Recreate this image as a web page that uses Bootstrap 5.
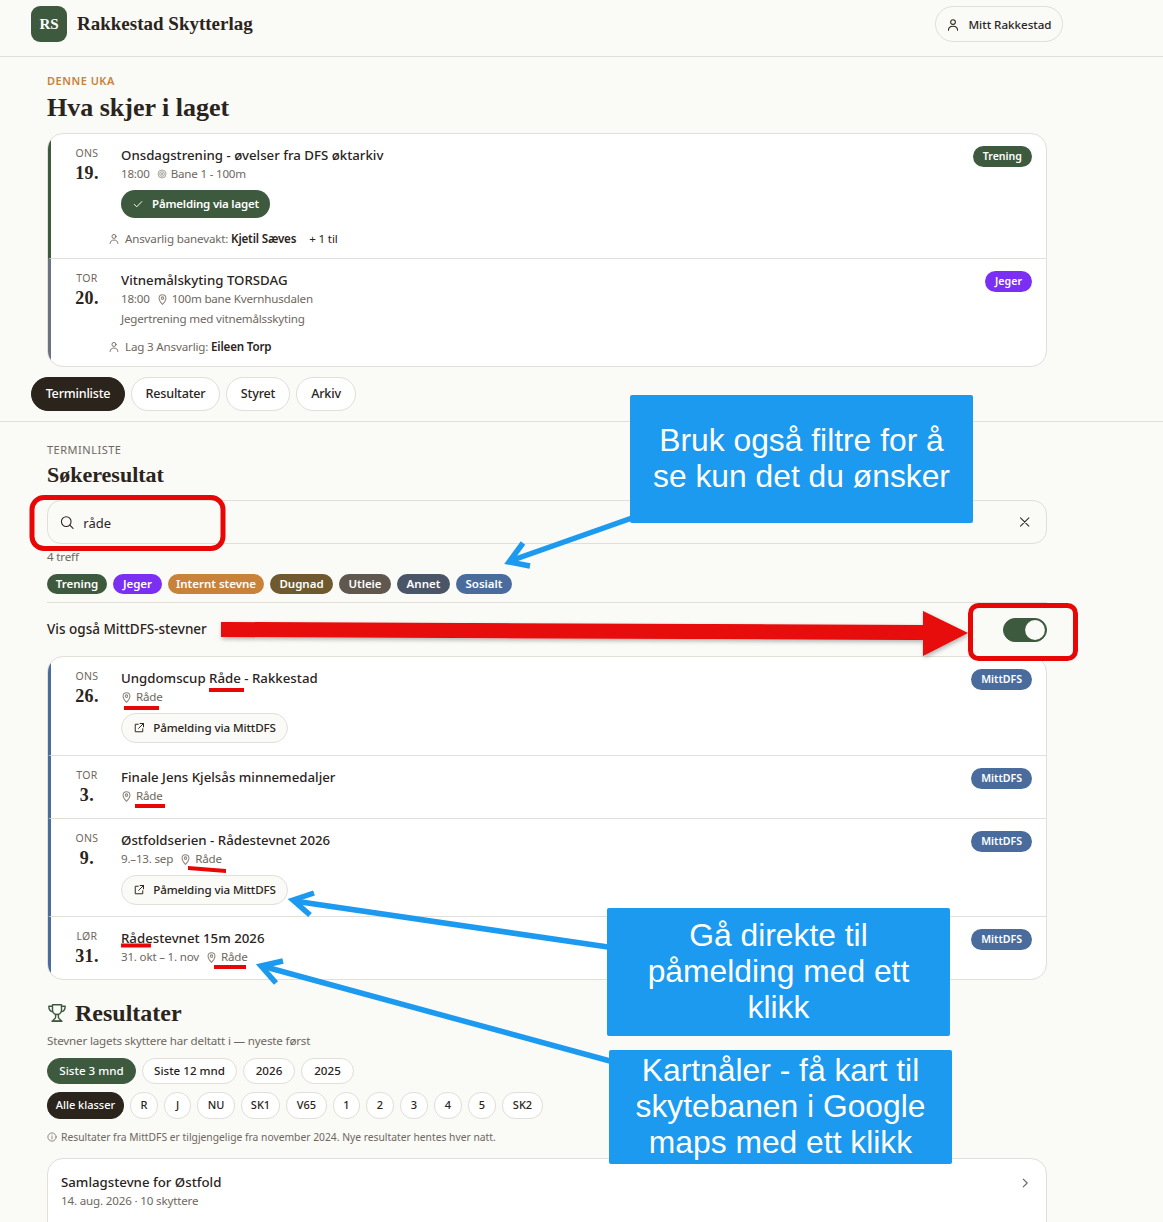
<!doctype html>
<html lang="no">
<head>
<meta charset="utf-8">
<title>Rakkestad Skytterlag</title>
<link href="https://cdn.jsdelivr.net/npm/bootstrap@5.3.0/dist/css/bootstrap.min.css" rel="stylesheet">
<style>
html,body{height:1222px;overflow:hidden}
body{background:#fafaf7;color:#2b241c;font-family:"Noto Sans","Liberation Sans",sans-serif;font-size:13px;position:relative}
.serif{font-family:"Liberation Serif",serif;font-weight:700}
.wrap{width:1032px;margin-left:31px}
.top-bar{height:57px;border-bottom:1px solid #e2ded8}
.logo-box{width:36px;height:36px;border-radius:9px;background:#3d5a3e;color:#fff;font-size:15px}
.brand-name{font-size:19px;color:#2b241c}
.ghost-pill{height:36px;width:128px;border:1px solid #e2ded8;border-radius:18px;font-size:11.6px;font-weight:500;color:#2b241c;background:transparent;padding:1px 0 0}
.indent{padding:0 16px}
.eyebrow{font-size:11px;letter-spacing:.5px;font-weight:600;line-height:15px}
.h-main{font-size:26px;line-height:30px;margin:5px 0 10px}
.ev-card{background:#fff;border:1px solid #e2ded8;border-radius:16px;overflow:hidden}
.ev-row{display:flex;padding:11px 14px 0 12px;border-left:3px solid #4a6c9d;border-bottom:1px solid #e2ded8;position:relative}
.ev-row:last-child{border-bottom:0}
.date-col{width:48px;text-align:center;margin-right:10px;margin-top:1px;flex:none}
.dow{font-size:10.5px;letter-spacing:.3px;color:#6f675e;line-height:14px}
.dnum{font-size:18px;line-height:22px;color:#2b241c;margin-top:2px;letter-spacing:.4px}
.ev-title{font-size:13.25px;font-weight:500;line-height:20px;color:#2b241c}
.ev-meta{font-size:11.6px;letter-spacing:-.2px;line-height:18px;color:#6f675e;display:flex;align-items:center;gap:7px}
.ev-meta svg{color:#8f887f}
.ev-desc{font-size:11.6px;letter-spacing:-.2px;line-height:18px;color:#6f675e;margin-top:2px}
.resp{position:absolute;left:57px;bottom:10px;font-size:11.6px;letter-spacing:-.17px;line-height:18px;color:#6f675e;display:flex;align-items:center;gap:5px}
.resp b{color:#2b241c;font-weight:600}
.tag{font-size:10.6px;font-weight:600;color:#fff;border-radius:11px;padding:0 10px;line-height:20px;height:21px;position:absolute;right:14px;top:12px}
.bg-green{background:#3d5a3e}.bg-purple{background:#7b2ff2}.bg-orange{background:#c8823a}.bg-brown{background:#6f5a30}.bg-stone{background:#60584f}.bg-slate{background:#4b5568}.bg-blue{background:#4a6c9d}
.act-green{height:28px;width:149px;background:#3d5a3e;color:#fff;border-radius:14px;font-size:11.5px;letter-spacing:-.2px;font-weight:600;padding:0;margin-top:7px;border:0}
.act-line{height:30px;width:167px;background:#fafaf7;color:#2b241c;border:1px solid #e2ded8;border-radius:15px;font-size:11.6px;letter-spacing:-.1px;font-weight:500;padding:0;margin-top:7px}
.tab-row{margin-top:10px;gap:6px}
.tab-pill{height:34px;border:1px solid #e2ded8;border-radius:17px;background:#fff;color:#2b241c;font-size:12.6px;letter-spacing:-.2px;font-weight:500;padding:0;display:flex;align-items:center;justify-content:center}
.tab-pill.on{background:#2b241c;border-color:#2b241c;color:#fff}
.rule{border-bottom:1px solid #e2ded8}
.search-box{height:44px;border:1px solid #e2ded8;border-radius:14px;padding:0 15px 0 12px;gap:9px}
.search-box input{border:0;background:transparent;box-shadow:none;padding:3px 0 0;font-size:13px;color:#2b241c}
.search-box input:focus{background:transparent;box-shadow:none}
.hits{font-size:11.6px;letter-spacing:-.17px;color:#6f675e;line-height:16px;margin-top:5px}
.chip{font-size:11.5px;font-weight:600;color:#fff;height:20px;line-height:20px;border-radius:10px;padding:0;text-align:center;display:block}
.mitt-row{height:54px;border-top:1px solid #e2ded8;margin-top:8px;font-size:13.5px;font-weight:500}
.form-check-input.swt{width:44px!important;height:24px;margin:0;background-color:#3d5a3e;border-color:#3d5a3e;float:none}
.form-switch .form-check-input.swt:checked{background-image:url("data:image/svg+xml,%3csvg xmlns='http://www.w3.org/2000/svg' viewBox='-4 -4 8 8'%3e%3ccircle r='3.6' fill='%23fafaf7'/%3e%3c/svg%3e")}
.form-switch{padding:0;min-height:0;margin:0}
.res-head{font-size:24px;line-height:30px}
.sub-line{font-size:11.6px;letter-spacing:-.17px;line-height:16px;color:#6f675e}
.flt{height:26px;border:1px solid #e2ded8;border-radius:13px;background:#fff;color:#2b241c;font-size:11.6px;font-weight:500;padding:0;display:flex;align-items:center;justify-content:center}
.flt.g{background:#3d5a3e;border-color:#3d5a3e;color:#fff}
.flt.d{background:#2b241c;border-color:#2b241c;color:#fff}
.cls{height:27px;font-size:11px}
.info-line{font-size:10.3px;line-height:14px;color:#6f675e}
.res-card{height:90px;background:#fff;border:1px solid #e2ded8;border-radius:16px;padding:13px 14px 13px 13px}
.res-title{font-size:13.25px;font-weight:500;line-height:20px}
.callout{position:absolute;background:#1b9af0;color:#fff;font-family:"Liberation Sans",Arial,sans-serif;font-size:31.800px;line-height:36px;text-align:center;border-radius:2px;display:flex;align-items:center;justify-content:center;padding-bottom:2px}
.overlay{position:absolute;left:0;top:0;pointer-events:none}
</style>
</head>
<body>
<svg width="0" height="0" class="d-block position-absolute">
<defs>
<symbol id="i-person" viewBox="0 0 16 16" fill="none" stroke="currentColor" stroke-width="1.2" stroke-linecap="round"><circle cx="8" cy="4.6" r="2.7"/><path d="M2.8 14c0-3 2.2-4.6 5.2-4.6s5.2 1.6 5.2 4.6"/></symbol>
<symbol id="i-pin" viewBox="0 0 16 16" fill="none" stroke="currentColor" stroke-width="1.500"><path d="M8 15S3 10 3 6a5 5 0 0 1 10 0c0 4-5 9-5 9z"/><circle cx="8" cy="6" r="1.800"/></symbol>
<symbol id="i-target" viewBox="0 0 16 16" fill="none" stroke="currentColor" stroke-width="1.2"><circle cx="8" cy="8" r="6.4"/><circle cx="8" cy="8" r="3.8"/><circle cx="8" cy="8" r="1.4"/></symbol>
<symbol id="i-check" viewBox="0 0 16 16" fill="none" stroke="currentColor" stroke-width="1.3" stroke-linecap="round" stroke-linejoin="round"><path d="M3 8.5l3.3 3.3L13 4.8"/></symbol>
<symbol id="i-search" viewBox="0 0 16 16" fill="none" stroke="currentColor" stroke-width="1.2" stroke-linecap="round"><circle cx="7" cy="7" r="5.4"/><path d="M11 11l3.6 3.6"/></symbol>
<symbol id="i-x" viewBox="0 0 16 16" fill="none" stroke="currentColor" stroke-width="1.2" stroke-linecap="round"><path d="M3 3l10 10M13 3L3 13"/></symbol>
<symbol id="i-ext" viewBox="0 0 16 16" fill="none" stroke="currentColor" stroke-width="1.3" stroke-linecap="round" stroke-linejoin="round"><path d="M7 3H3v10h10V9"/><path d="M9.500 2H14v4.500M14 2L7.500 8.500"/></symbol>
<symbol id="i-trophy" viewBox="0 0 20 20" fill="none" stroke="currentColor" stroke-width="1.400" stroke-linejoin="round"><path d="M5.500 1.800h9v5.200a4.500 4.500 0 0 1-9 0z"/><path d="M5.500 3.200H1.800c0 3.600 1.400 5.300 4.400 5.700M14.500 3.200h3.700c0 3.600-1.400 5.300-4.400 5.700"/><path d="M8.600 11.400v2.800c0 1.300-1.600 2-3 3.800h8.800c-1.400-1.800-3-2.500-3-3.800v-2.800"/><path d="M4.500 18.300h11"/></symbol>
<symbol id="i-info" viewBox="0 0 16 16" fill="none" stroke="currentColor" stroke-width="1.200" stroke-linecap="round"><circle cx="8" cy="8" r="6.600"/><path d="M8 7.200v4M8 4.700v.3"/></symbol>
<symbol id="i-chev" viewBox="0 0 16 16" fill="none" stroke="currentColor" stroke-width="1.300" stroke-linecap="round" stroke-linejoin="round"><path d="M6 3.500L10.500 8 6 12.500"/></symbol>
</defs>
</svg>

<header class="top-bar">
<div class="wrap d-flex align-items-start justify-content-between pt-0" style="height:52px">
<div class="d-flex align-items-center" style="margin-top:6px;gap:10px">
<div class="logo-box d-flex align-items-center justify-content-center serif">RS</div>
<div class="brand-name serif">Rakkestad Skytterlag</div>
</div>
<button class="btn ghost-pill d-flex align-items-center justify-content-center gap-2" style="margin-top:6px"><svg width="14" height="14"><use href="#i-person"/></svg>Mitt Rakkestad</button>
</div>
</header>

<main class="wrap">
<section class="indent" style="padding-top:16px">
<div class="eyebrow" style="color:#c8823a">DENNE UKA</div>
<h1 class="h-main serif">Hva skjer i laget</h1>
<div class="ev-card">
<div class="ev-row" style="height:125px;border-left-color:#3d5a3e">
<div class="date-col"><div class="dow">ONS</div><div class="dnum serif">19.</div></div>
<div><div class="ev-title">Onsdagstrening - øvelser fra DFS øktarkiv</div>
<div class="ev-meta">18:00 <span class="d-inline-flex align-items-center gap-1"><svg width="10" height="10"><use href="#i-target"/></svg>Bane 1 - 100m</span></div>
<button class="btn act-green d-flex align-items-center justify-content-center gap-2"><svg width="12" height="12"><use href="#i-check"/></svg>Påmelding via laget</button></div>
<span class="tag bg-green">Trening</span>
<div class="resp"><svg width="12" height="12"><use href="#i-person"/></svg><span>Ansvarlig banevakt: <b>Kjetil Sæves</b></span><span class="ms-2" style="color:#2b241c">+ 1 til</span></div>
</div>
<div class="ev-row" style="height:107px;border-left-color:#6b7280">
<div class="date-col"><div class="dow">TOR</div><div class="dnum serif">20.</div></div>
<div><div class="ev-title">Vitnemålskyting TORSDAG</div>
<div class="ev-meta">18:00 <span class="d-inline-flex align-items-center gap-1"><svg width="11" height="11"><use href="#i-pin"/></svg>100m bane Kvernhusdalen</span></div>
<div class="ev-desc">Jegertrening med vitnemålsskyting</div></div>
<span class="tag bg-purple">Jeger</span>
<div class="resp"><svg width="12" height="12"><use href="#i-person"/></svg><span>Lag 3 Ansvarlig: <b>Eileen Torp</b></span></div>
</div>
</div>
</section>
</main>

<nav class="wrap d-flex tab-row">
<a class="tab-pill on text-decoration-none" style="width:94px">Terminliste</a>
<a class="tab-pill text-decoration-none" style="width:89px">Resultater</a>
<a class="tab-pill text-decoration-none" style="width:64px">Styret</a>
<a class="tab-pill text-decoration-none" style="width:60px">Arkiv</a>
</nav>
<div class="rule" style="margin-top:10px"></div>

<main class="wrap">
<section class="indent" style="padding-top:20px">
<div class="eyebrow fw-normal" style="color:#6f675e">TERMINLISTE</div>
<h2 class="serif" style="font-size:22px;line-height:26px;margin:5px 0 12px">Søkeresultat</h2>
<div class="search-box d-flex align-items-center">
<svg width="15" height="15"><use href="#i-search"/></svg>
<input class="form-control" value="råde" aria-label="Søk">
<svg width="14" height="14"><use href="#i-x"/></svg>
</div>
<div class="hits">4 treff</div>
<div class="d-flex" style="gap:6px;margin-top:9px">
<span class="chip bg-green" style="width:60px">Trening</span>
<span class="chip bg-purple" style="width:49px">Jeger</span>
<span class="chip bg-orange" style="width:96px">Internt stevne</span>
<span class="chip bg-brown" style="width:63px">Dugnad</span>
<span class="chip bg-stone" style="width:52px">Utleie</span>
<span class="chip bg-slate" style="width:53px">Annet</span>
<span class="chip bg-blue" style="width:56px">Sosialt</span>
</div>
<div class="mitt-row d-flex align-items-center justify-content-between">
<span>Vis også MittDFS-stevner</span>
<div class="form-check form-switch"><input class="form-check-input swt" type="checkbox" checked role="switch" aria-label="Vis også MittDFS-stevner"></div>
</div>
<div class="ev-card">
<div class="ev-row" style="height:99px">
<div class="date-col"><div class="dow">ONS</div><div class="dnum serif">26.</div></div>
<div><div class="ev-title">Ungdomscup Råde - Rakkestad</div>
<div class="ev-meta"><span class="d-inline-flex align-items-center gap-1"><svg width="11" height="11"><use href="#i-pin"/></svg>Råde</span></div>
<button class="btn act-line d-flex align-items-center justify-content-center gap-2"><svg width="12" height="12"><use href="#i-ext"/></svg>Påmelding via MittDFS</button></div>
<span class="tag bg-blue">MittDFS</span>
</div>
<div class="ev-row" style="height:63px">
<div class="date-col"><div class="dow">TOR</div><div class="dnum serif">3.</div></div>
<div><div class="ev-title">Finale Jens Kjelsås minnemedaljer</div>
<div class="ev-meta"><span class="d-inline-flex align-items-center gap-1"><svg width="11" height="11"><use href="#i-pin"/></svg>Råde</span></div></div>
<span class="tag bg-blue">MittDFS</span>
</div>
<div class="ev-row" style="height:98px">
<div class="date-col"><div class="dow">ONS</div><div class="dnum serif">9.</div></div>
<div><div class="ev-title">Østfoldserien - Rådestevnet 2026</div>
<div class="ev-meta">9.–13. sep <span class="d-inline-flex align-items-center gap-1"><svg width="11" height="11"><use href="#i-pin"/></svg>Råde</span></div>
<button class="btn act-line d-flex align-items-center justify-content-center gap-2"><svg width="12" height="12"><use href="#i-ext"/></svg>Påmelding via MittDFS</button></div>
<span class="tag bg-blue">MittDFS</span>
</div>
<div class="ev-row" style="height:62px">
<div class="date-col"><div class="dow">LØR</div><div class="dnum serif">31.</div></div>
<div><div class="ev-title">Rådestevnet 15m 2026</div>
<div class="ev-meta">31. okt – 1. nov <span class="d-inline-flex align-items-center gap-1"><svg width="11" height="11"><use href="#i-pin"/></svg>Råde</span></div></div>
<span class="tag bg-blue">MittDFS</span>
</div>
</div>

<div class="d-flex align-items-center res-head serif gap-2" style="margin-top:18px"><svg width="20" height="20" style="color:#3d5a3e"><use href="#i-trophy"/></svg>Resultater</div>
<div class="sub-line" style="margin-top:5px">Stevner lagets skyttere har deltatt i — nyeste først</div>
<div class="d-flex" style="gap:6px;margin-top:9px">
<span class="flt g" style="width:89px">Siste 3 mnd</span><span class="flt" style="width:95px">Siste 12 mnd</span><span class="flt" style="width:52px">2026</span><span class="flt" style="width:53px">2025</span>
</div>
<div class="d-flex" style="gap:6px;margin-top:8px">
<span class="flt cls d" style="width:77px">Alle klasser</span><span class="flt cls" style="width:28px">R</span><span class="flt cls" style="width:27px">J</span><span class="flt cls" style="width:38px">NU</span><span class="flt cls" style="width:39px">SK1</span><span class="flt cls" style="width:41px">V65</span><span class="flt cls" style="width:27px">1</span><span class="flt cls" style="width:28px">2</span><span class="flt cls" style="width:28px">3</span><span class="flt cls" style="width:28px">4</span><span class="flt cls" style="width:28px">5</span><span class="flt cls" style="width:41px">SK2</span>
</div>
<div class="info-line d-flex align-items-center gap-1" style="margin-top:11px"><svg width="10" height="10"><use href="#i-info"/></svg>Resultater fra MittDFS er tilgjengelige fra november 2024. Nye resultater hentes hver natt.</div>
<div class="res-card d-flex justify-content-between" style="margin-top:14px">
<div><div class="res-title">Samlagstevne for Østfold</div><div class="sub-line" style="margin-top:1px">14. aug. 2026 · 10 skyttere</div></div>
<svg width="14" height="14" class="mt-1" style="color:#6f675e"><use href="#i-chev"/></svg>
</div>
</section>
</main>

<svg class="overlay" width="1163" height="1222" viewBox="0 0 1163 1222">
<defs><filter id="soft" x="-5%" y="-30%" width="110%" height="170%"><feDropShadow dx="1" dy="2" stdDeviation="2" flood-color="#000" flood-opacity=".3"/></filter></defs>
<rect x="32" y="497.500" width="191" height="51" rx="12" fill="none" stroke="#e80707" stroke-width="5"/>
<rect x="970.500" y="605.500" width="105" height="53" rx="8" fill="none" stroke="#e80707" stroke-width="5"/>
<polygon filter="url(#soft)" fill="#e80707" points="221,622 923,625 923,611 968,633 923,656 923,640 221,637"/>
<g fill="none" stroke="#1b9af0" stroke-width="5.500" stroke-linejoin="miter">
<path d="M632 518L510 561"/><path d="M523 543L509 562L530 566"/>
<path d="M608 947L294 901"/><path d="M314 893L293 900L310 915"/>
<path d="M610 1061L262 966"/><path d="M283 961L261 966L276 983"/>
</g>
<g fill="#e80707">
<rect x="209" y="688" width="35" height="4"/><rect x="124" y="706" width="35" height="4"/>
<rect x="135" y="804" width="30" height="4"/><polygon points="188,866 226,869 226,873 188,870"/>
<rect x="121" y="943.500" width="30" height="4"/><rect x="214" y="965" width="32" height="4"/>
</g>
</svg>
<div class="callout" style="left:630px;top:395px;width:343px;height:128px">Bruk også filtre for å<br>se kun det du ønsker</div>
<div class="callout" style="left:607px;top:908px;width:343px;height:128px">Gå direkte til<br>påmelding med ett<br>klikk</div>
<div class="callout" style="left:609px;top:1050px;width:343px;height:114px">Kartnåler - få kart til<br>skytebanen i Google<br>maps med ett klikk</div>
</body>
</html>
